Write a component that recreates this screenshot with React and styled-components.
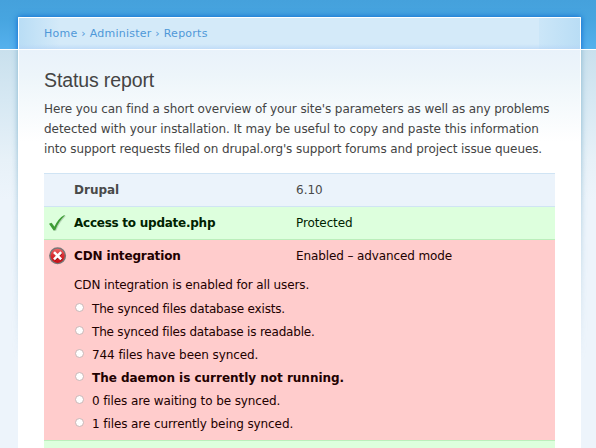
import React from "react";
import styled, { createGlobalStyle } from "styled-components";

const GlobalStyle = createGlobalStyle`
  * { box-sizing: border-box; }
  body {
    margin: 0;
    overflow: hidden;
    font-family: "DejaVu Sans", Verdana, sans-serif;
    font-size: 12px;
    color: #444;
  }
`;

const Page = styled.div`
  position: relative;
  width: 596px;
  height: 448px;
  overflow: hidden;
  padding: 17px 15px 0 18px;
  background:
    linear-gradient(#45a1dc, #47a5e0 40%, #55b1ed) 0 0 / 100% 49px no-repeat,
    linear-gradient(#fff, #fff) 0 49px / 100% 1px no-repeat,
    linear-gradient(#c9e0ed, #d6e8f3 50px, #e7f1f8 110px, #edf4fb 150px) 0 50px / 100% 398px no-repeat;
`;

const HeaderShade = styled.div`
  position: absolute;
  inset: 0 0 auto;
  height: 49px;
  overflow: hidden;
  &::before {
    content: "";
    position: absolute;
    inset: 17px 15px -20px 18px;
    box-shadow: 0 0 6px 0 #0864cf;
  }
`;

const BodyShade = styled.div`
  position: absolute;
  inset: 50px 0 auto;
  height: 310px;
  overflow: hidden;
  mask-image: linear-gradient(#000 25%, transparent);
  &::before {
    content: "";
    position: absolute;
    inset: -20px 15px -20px 18px;
    box-shadow: 0 0 6px 0 #83b4cc;
  }
`;

const Panel = styled.main`
  position: relative;
  height: 431px;
  border: 1px solid #fff;
  border-bottom: 0;
  border-radius: 1px 1px 0 0;
  background: #fff;
`;

const Breadcrumb = styled.nav`
  height: 32px;
  padding: 0 25px;
  line-height: 31px;
  font-size: 11px;
  letter-spacing: 0.25px;
  color: #4f98d8;
  border-bottom: 1px solid #fff;
  background:
    linear-gradient(transparent 26px, #b4d3f699 31px),
    linear-gradient(90deg, #b9ddf5, #d4eaf900 41px) left / 41px 100% no-repeat,
    linear-gradient(270deg, #b9ddf5, #cbe6f8 40px) right / 41px 100% no-repeat,
    #d4eaf9;
`;

const Content = styled.div`
  padding: 17px 25px 0;
  background: linear-gradient(#e9f2fa, #edf5fa 25px, #fff 92px);
`;

const Title = styled.h1`
  margin: 0;
  font: 400 19.5px/26px "Liberation Sans", Arial, sans-serif;
  letter-spacing: -0.12px;
`;

const Intro = styled.div`
  margin: 6px 0 14px;
  line-height: 20px;
`;

const Line = styled.span`
  display: block;
  width: max-content;
  white-space: nowrap;
  letter-spacing: ${(p) => p.$track || "0"};
`;

const Report = styled.section`
  width: 511px;
`;

const tones = {
  info: "background: #ebf3fb; border-color: #d0e4f4; color: #494949;",
  ok: "background: #ddffdd; border-color: #bbeebb; color: #020;",
  error: "background: #ffcccc; border-color: #bbeebb; color: #200;",
};

const Row = styled.div`
  display: grid;
  grid-template-columns: 30px 222px 1fr;
  height: 33px;
  line-height: 33px;
  border-style: solid;
  border-width: ${(p) => (p.$first ? "1px 0" : "0 0 1px")};
  ${(p) => p.$first && "height: 34px;"}
  ${(p) => p.$plain && "border-bottom: 0;"}
  ${(p) => tones[p.$tone]}
`;

const IconCell = styled.span`
  padding: 7px 0 0 5px;
  svg { display: block; }
`;

const Name = styled(Line)`
  font-weight: 700;
`;

const Details = styled.div`
  height: 168px;
  padding: 4px 0 0 30px;
  line-height: 17px;
  background: #ffcccc;
  border-bottom: 1px solid #bbeebb;
  color: #200;
`;

const List = styled.ul`
  margin: 4px 0 0;
  padding: 0;
  list-style: none;
`;

const Item = styled.li`
  display: flex;
  height: 23px;
  line-height: 23px;
  font-weight: ${(p) => (p.$strong ? 700 : 400)};
  &::before {
    content: "";
    width: 7px;
    height: 7px;
    margin: 5px 8px 0 1px;
    flex: none;
    border: 1px solid #c9b6b6;
    border-radius: 50%;
    background: #fff;
  }
`;

const NextRow = styled.div`
  height: 20px;
  background: #ddffdd;
`;

const OkIcon = () => (
  <svg width="18" height="18" viewBox="0 0 18 18">
    <path d="M1 10.6 3.3 9.5 6.2 13.2C8.5 8 12 3.8 16.3 1.6L16.6 2.3C12.8 6 9.7 10.5 7.2 16.7L5.5 17.1Z" fill="#9bb79b" opacity=".6" />
    <path d="M0 9.8 2.5 8.8 5.4 12.8C7.8 7.5 11 3.3 15.4 1L15.8 1.6C11.8 5.4 8.7 9.9 6.3 16L4.6 16.5Z" fill="#3d9c35" />
  </svg>
);

const ErrorIcon = () => (
  <svg width="18" height="18" viewBox="0 0 18 18">
    <defs>
      <linearGradient id="red" x2="0" y2="1">
        <stop stopColor="#ef6b6b" />
        <stop offset=".5" stopColor="#d92c30" />
        <stop offset="1" stopColor="#c50b12" />
      </linearGradient>
    </defs>
    <circle cx="8.6" cy="8.8" r="7.8" fill="url(#red)" stroke="#777" strokeWidth="1.4" />
    <path d="m5.6 5.9 7 7M12.6 5.9l-7 7" stroke="#7d0a10" strokeWidth="2.2" />
    <path d="m5 5.2 7.2 7.2M12.2 5.2 5 12.4" stroke="#fff" strokeWidth="2.6" />
  </svg>
);

const intro = [
  ["Here you can find a short overview of your site's parameters as well as any problems", "-0.09px"],
  ["detected with your installation. It may be useful to copy and paste this information", "-0.05px"],
  ["into support requests filed on drupal.org's support forums and project issue queues.", "-0.095px"],
];

const items = [
  ["The synced files database exists.", "-0.18px"],
  ["The synced files database is readable.", "-0.2px"],
  ["744 files have been synced.", "-0.08px"],
  ["The daemon is currently not running.", "-0.02px", true],
  ["0 files are waiting to be synced.", "-0.1px"],
  ["1 files are currently being synced.", "-0.09px"],
];

export default function App() {
  return (
    <>
      <GlobalStyle />
      <Page>
        <HeaderShade />
        <BodyShade />
        <Panel>
          <Breadcrumb>Home › Administer › Reports</Breadcrumb>
          <Content>
            <Title>Status report</Title>
            <Intro>
              {intro.map(([text, track]) => <Line key={text} $track={track}>{text}</Line>)}
            </Intro>
            <Report>
              <Row $tone="info" $first>
                <IconCell />
                <Name>Drupal</Name>
                <Line>6.10</Line>
              </Row>
              <Row $tone="ok">
                <IconCell><OkIcon /></IconCell>
                <Name $track="-0.25px">Access to update.php</Name>
                <Line $track="-0.1px">Protected</Line>
              </Row>
              <Row $tone="error" $plain>
                <IconCell><ErrorIcon /></IconCell>
                <Name $track="-0.14px">CDN integration</Name>
                <Line $track="-0.11px">Enabled – advanced mode</Line>
              </Row>
              <Details>
                <Line $track="-0.12px">CDN integration is enabled for all users.</Line>
                <List>
                  {items.map(([text, track, strong]) => (
                    <Item key={text} $strong={strong}><Line $track={track}>{text}</Line></Item>
                  ))}
                </List>
              </Details>
              <NextRow />
            </Report>
          </Content>
        </Panel>
      </Page>
    </>
  );
}
